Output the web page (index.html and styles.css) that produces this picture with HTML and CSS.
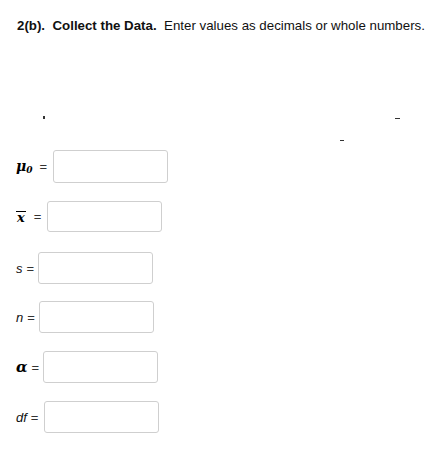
FILE: index.html
```html
<!DOCTYPE html>
<html>
<head>
<meta charset="utf-8">
<link rel="stylesheet" href="styles.css">
</head>
<body>
<div class="page">
  <p class="title"><b>2(b).&nbsp; Collect the Data.</b>&nbsp; Enter values as decimals or whole numbers.</p>
  <span class="speck s1"></span>
  <span class="speck s2"></span>
  <span class="speck s3"></span>
  <div class="form">
    <div class="row r1"><span class="lbl mj">μ<sub>0</sub></span><span class="eq eq-wide">=</span><input class="box" type="text"></div>
    <div class="row r2"><span class="lbl mj xbar">x</span><span class="eq eq-wide">=</span><input class="box" type="text"></div>
    <div class="row r3"><span class="lbl it">s</span><span class="eq">=</span><input class="box" type="text"></div>
    <div class="row r4"><span class="lbl it">n</span><span class="eq">=</span><input class="box" type="text"></div>
    <div class="row r5"><span class="lbl mj alpha">α</span><span class="eq">=</span><input class="box" type="text"></div>
    <div class="row r6"><span class="lbl it">df</span><span class="eq">=</span><input class="box" type="text"></div>
  </div>
</div>
</body>
</html>
```
FILE: styles.css
```css
html, body {
  margin: 0;
  padding: 0;
  background: #fff;
}
body {
  font-family: "Liberation Sans", Arial, sans-serif;
  font-size: 13.3px;
  color: #111;
}
.page {
  position: relative;
  width: 429px;
  height: 449px;
}
.title {
  margin: 0;
  padding: 18px 0 0 17px;
  white-space: nowrap;
  line-height: 16px;
  font-size: 13.3px;
}
.title b {
  font-weight: bold;
}
.speck {
  position: absolute;
  background: #333;
}
.s1 { left: 43px; top: 116px; width: 2px; height: 3px; }
.s2 { left: 395px; top: 118px; width: 5px; height: 1px; }
.s3 { left: 340px; top: 140px; width: 4px; height: 1px; }
.form {
  padding: 0 0 0 16px;
  margin-top: 116px;
  display: flex;
  flex-direction: column;
}
.row {
  display: flex;
  align-items: center;
  height: 32px;
  margin-bottom: 18px;
}
.r1 { height: 33px; }
.r2 { height: 31px; }
.r3 { margin-top: 2px; }
.r4 { margin-top: -1px; }
.lbl {
  color: #111;
}
.mj {
  font-family: "DejaVu Serif", serif;
  font-weight: bold;
  font-style: italic;
  font-size: 14px;
  color: #000;
}
.mj sub {
  font-size: 9px;
  vertical-align: -2px;
}
.xbar {
  display: inline-block;
  line-height: 11px;
  border-top: 1.5px solid #000;
  font-size: 13px;
  padding: 0 1px;
}
.alpha {
  font-size: 15px;
}
.it {
  font-style: italic;
  font-family: "Liberation Sans", Arial, sans-serif;
  font-size: 13px;
}
.eq {
  margin-left: 3px;
  margin-right: 3px;
  font-size: 13px;
  color: #333;
}
.r1 .eq-wide {
  margin-left: 7px;
  margin-right: 6px;
}
.r2 .eq-wide {
  margin-left: 8px;
  margin-right: 6px;
}
.r3 .eq {
  margin-left: 4px;
  margin-right: 4px;
}
.r4 .eq {
  margin-left: 4px;
  margin-right: 4px;
}
.r5 .eq {
  margin-left: 4px;
  margin-right: 4px;
}
.r6 .eq {
  margin-left: 4px;
  margin-right: 6px;
}
.box {
  box-sizing: border-box;
  width: 115px;
  height: 100%;
  border: 1px solid #cfcfcf;
  border-radius: 3px;
  margin: 0;
  padding: 0;
  background: #fff;
  outline: none;
}
```
